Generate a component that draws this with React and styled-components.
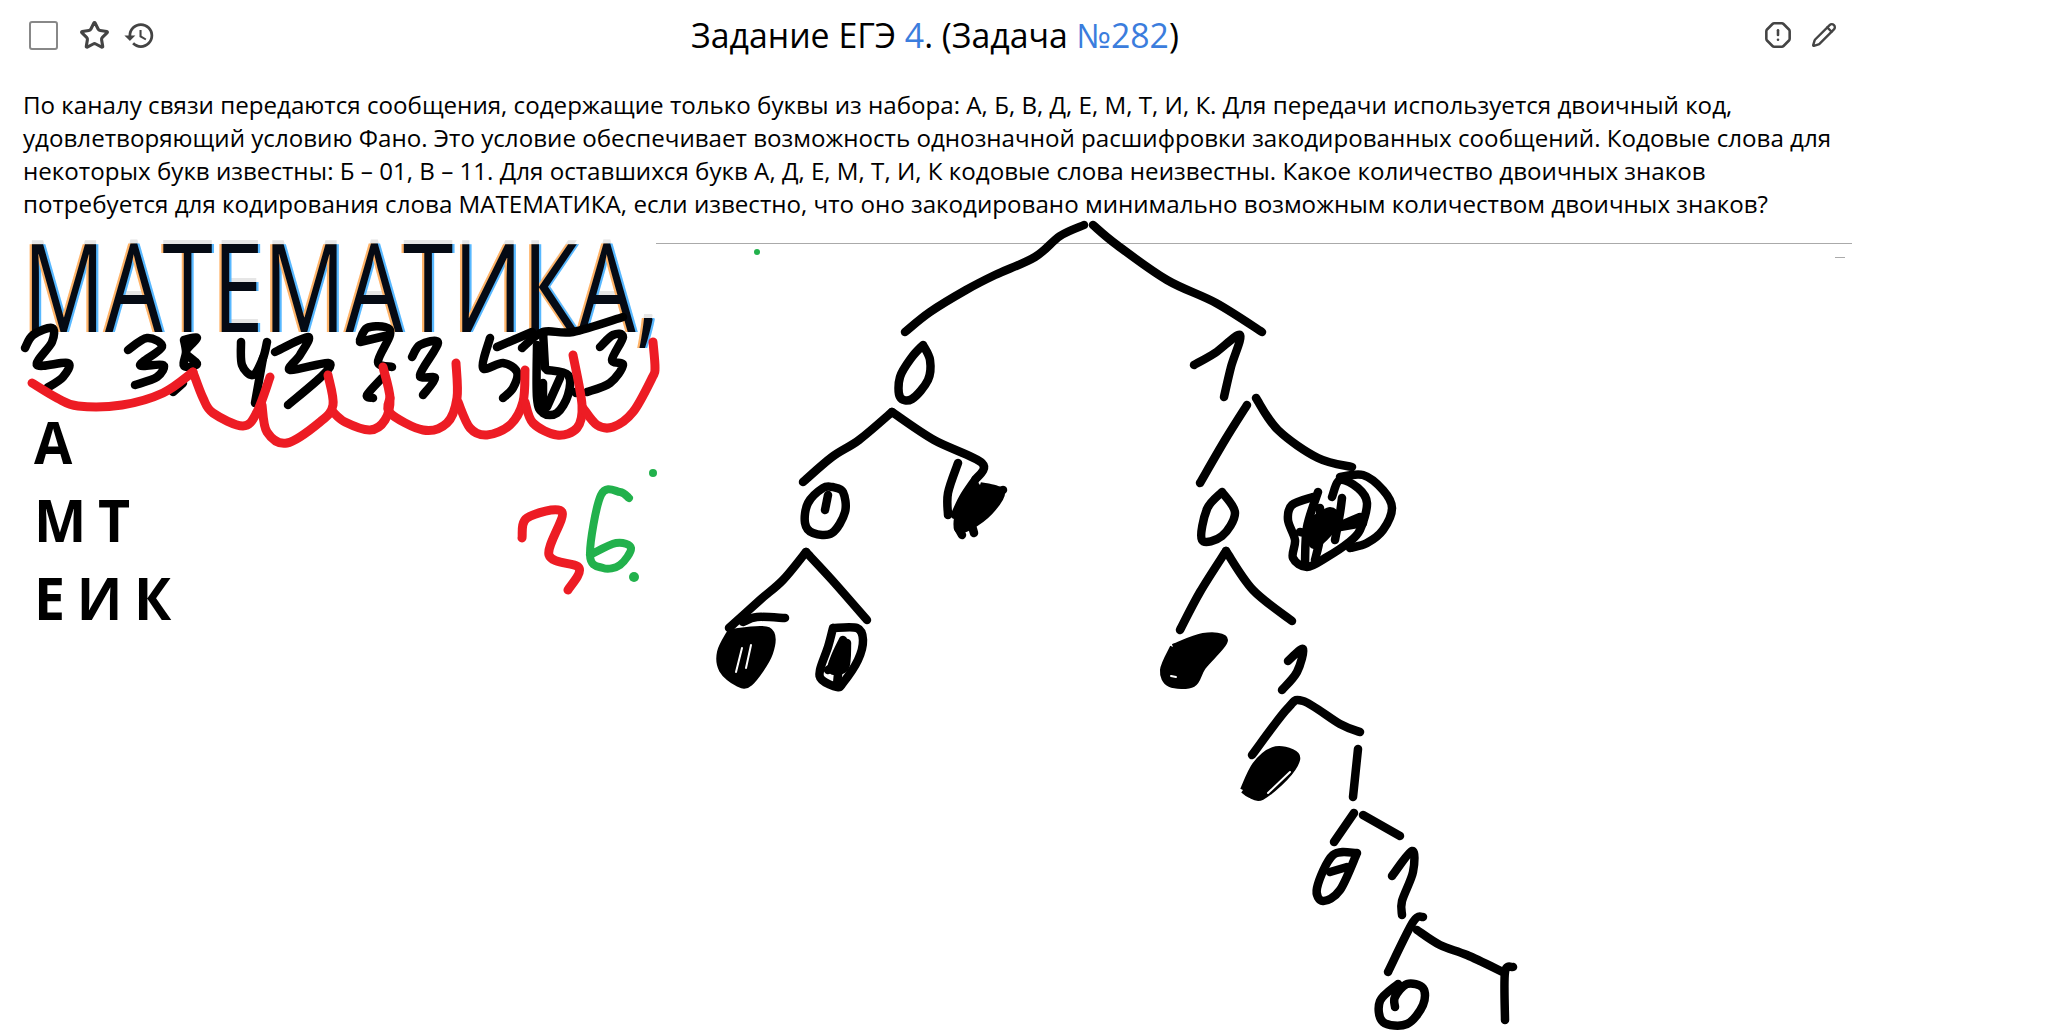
import React from 'react';
import styled, { createGlobalStyle } from 'styled-components';
import { OctagonAlert, Pencil, Star } from 'lucide-react';
import { MdHistory } from 'react-icons/md';

const GlobalStyle = createGlobalStyle`
  html, body {
    margin: 0;
    padding: 0;
    background: #fff;
    overflow: hidden;
  }
`;

const Page = styled.div`
  position: relative;
  width: 2070px;
  height: 1034px;
  overflow: hidden;
  font-family: 'Open Sans', 'Noto Sans', sans-serif;
  color: #000;
`;

const Card = styled.div`
  width: 1852px;
  box-sizing: border-box;
  padding: 0 0 0 23px;
`;

const Header = styled.header`
  display: grid;
  grid-template-columns: 1fr auto 1fr;
  align-items: center;
  height: 70px;
  padding: 0 15px 0 6px;
`;

const Tools = styled.div`
  display: flex;
  align-items: center;
  justify-content: ${({ $end }) => ($end ? 'flex-end' : 'flex-start')};
  gap: ${({ $end }) => ($end ? '19px' : '13px')};
  color: #444;
`;

const Check = styled.span`
  width: 29px;
  height: 29px;
  box-sizing: border-box;
  border: 2px solid #888;
  border-radius: 3px;
  margin-right: 8px;
`;

const Title = styled.h1`
  margin: 0 0 0 4px;
  font-size: 33.8px;
  font-weight: 400;
  line-height: 40px;
  white-space: nowrap;
`;

const Accent = styled.span`
  color: #3b7ddd;
`;

const Statement = styled.p`
  margin: 18px 0 0;
  font-size: 24.15px;
  line-height: 33px;
  width: 1815px;
`;

const Figure = styled.div`
  display: flex;
  margin-top: 23px;
`;

const Picture = styled.div`
  width: 633px;
  flex: none;
`;

const Word = styled.div`
  margin-top: -8px;
  font-size: 123px;
  line-height: 100px;
  height: 100px;
  white-space: nowrap;
  transform-origin: left top;
  transform: scaleX(0.741);
  text-shadow: -3px 0 #ffb469, 3px 0 #58b8ff, 0 -4px #e6e6e6;
  color: #050a14;
`;

const Groups = styled.div`
  margin: 79px 0 0 11px;
  display: flex;
  flex-direction: column;
  gap: 24px;
`;

const Group = styled.div`
  font-size: 59px;
  font-weight: 700;
  line-height: 54px;
  white-space: nowrap;
  word-spacing: -3px;
  transform-origin: left top;
  transform: scaleX(0.94);
`;

const Rule = styled.div`
  flex: 1;
  position: relative;
  height: 1px;
  background: #aaa;
`;

const Dash = styled.span`
  position: absolute;
  right: 7px;
  top: 14px;
  width: 10px;
  height: 1px;
  background: #aaa;
`;

const Sketch = styled.svg`
  position: absolute;
  inset: 0;
  pointer-events: none;
`;

// catmull-rom through the points so the pen lines don't look polygonal
const smooth = (pts) => {
  let d = `M${pts[0][0]} ${pts[0][1]}`;
  for (let i = 0; i < pts.length - 1; i++) {
    const p0 = pts[i - 1] || pts[i];
    const p1 = pts[i];
    const p2 = pts[i + 1];
    const p3 = pts[i + 2] || p2;
    const c1 = [p1[0] + (p2[0] - p0[0]) / 6, p1[1] + (p2[1] - p0[1]) / 6];
    const c2 = [p2[0] - (p3[0] - p1[0]) / 6, p2[1] - (p3[1] - p1[1]) / 6];
    d += `C${c1[0]} ${c1[1]} ${c2[0]} ${c2[1]} ${p2[0]} ${p2[1]}`;
  }
  return d;
};

const blackLines = [
  // tree
  [[1084,225],[1060,236],[1035,257],[995,275],[966,290],[930,312],[905,332]],
  [[1093,225],[1117,245],[1167,280],[1216,303],[1262,332]],
  [[923,345],[930,360],[928,380],[912,399],[900,397],[900,377],[912,357],[923,345]],
  [[1194,365],[1215,353],[1240,335],[1231,367],[1224,397]],
  [[892,412],[859,440],[832,457],[803,482]],
  [[892,412],[934,440],[982,463],[975,480]],
  [[958,463],[948,493],[948,515]],
  [[975,480],[963,498],[955,515]],
  [[958,528],[962,535]],
  [[972,526],[974,533]],
  [[985,495],[1003,490]],
  [[833,487],[843,492],[845,512],[832,533],[813,533],[805,523],[808,503],[823,488],[833,487]],
  [[828,495],[825,510]],
  [[806,552],[783,580],[760,600],[729,628]],
  [[806,552],[832,580],[867,620]],
  [[743,622],[757,617],[785,618]],
  [[833,628],[857,628],[863,640],[858,660],[843,683],[837,687],[822,680],[820,670],[828,647],[833,628]],
  [[843,640],[835,657],[832,670],[845,667],[847,643]],
  [[840,653],[837,685]],
  [[828,670],[843,660]],
  [[1247,405],[1225,440],[1200,483]],
  [[1256,398],[1278,430],[1318,458],[1352,467]],
  [[1222,492],[1235,513],[1222,536],[1202,540],[1207,509],[1222,492]],
  [[1226,551],[1200,592],[1180,630]],
  [[1226,551],[1253,590],[1292,621]],
  [[1288,661],[1303,649],[1297,672],[1282,690]],
  [[1252,755],[1287,709],[1303,701],[1340,724],[1360,732]],
  [[1358,749],[1353,797]],
  [[1354,813],[1334,842]],
  [[1363,815],[1400,836]],
  [[1357,853],[1333,855],[1317,888],[1323,901],[1340,890],[1357,853]],
  [[1330,872],[1347,867]],
  [[1392,876],[1412,851],[1413,872],[1402,901],[1402,915]],
  [[1423,917],[1413,922],[1388,972]],
  [[1417,930],[1440,945],[1467,955],[1503,972]],
  [[1513,967],[1505,972],[1505,1020]],
  [[1398,984],[1380,1001],[1383,1022],[1407,1024],[1423,1005],[1423,988],[1407,984],[1395,997],[1395,1007]],
  // scribbled-out circles on the right
  [[1340,477],[1363,475],[1383,490],[1392,508],[1383,530],[1367,543],[1350,548]],
  [[1332,497],[1340,480],[1358,488],[1367,503],[1360,530],[1348,543],[1327,557],[1307,567],[1293,558],[1295,540],[1288,520],[1292,505],[1313,497]],
  [[1318,492],[1307,527],[1305,563]],
  [[1320,508],[1320,537],[1315,560]],
  [[1300,532],[1320,533],[1360,517]],
  [[1342,498],[1340,513],[1335,540]],
  [[1340,527],[1363,523]],
  // digits under the word
  [[25,348],[33,335],[52,328],[52,342],[37,365],[68,363],[63,377],[47,388]],
  [[128,350],[147,338],[162,347],[140,365],[163,365],[157,377],[135,385]],
  [[184,340],[197,338],[186,352],[197,364],[184,366],[186,352],[184,340]],
  [[183,383],[173,392]],
  [[241,342],[242,365],[253,375],[263,358],[267,342]],
  [[263,358],[255,403]],
  [[275,352],[308,337],[300,355],[290,370],[328,363],[323,375],[288,405]],
  [[360,340],[367,328],[385,327],[390,335],[378,362],[392,367]],
  [[360,342],[385,336]],
  [[382,378],[367,395],[373,398]],
  [[412,357],[420,345],[438,343],[420,375],[435,378],[423,395]],
  [[532,332],[497,347]],
  [[490,338],[483,368],[503,363],[517,372],[513,388],[503,398]],
  [[522,348],[543,332],[573,332],[623,317]],
  [[537,345],[537,398],[543,413],[557,413],[568,395],[568,375],[547,370]],
  [[543,332],[545,368]],
  [[543,383],[543,405]],
  [[560,378],[547,407]],
  [[600,347],[613,335],[623,337],[612,360],[623,365],[610,383],[587,392]],
  [[575,392],[576,393]],
];

const blackBlobs = [
  [[980,485],[1002,492],[990,512],[970,527],[958,530],[957,518],[963,498],[980,485]],
  [[730,632],[768,630],[770,653],[750,683],[737,683],[722,670],[720,652],[730,632]],
  [[1312,520],[1330,510],[1338,520],[1325,538],[1312,545],[1312,520]],
  [[1173,647],[1203,636],[1225,640],[1203,667],[1193,684],[1170,684],[1163,670],[1173,647]],
  [[1243,790],[1255,765],[1273,750],[1292,752],[1297,760],[1285,778],[1262,797],[1250,795],[1243,790]],
];

// little gaps the pen left inside the filled scribbles
const slits = [
  [[742,648],[736,672]],
  [[751,645],[746,668]],
  [[1268,793],[1290,772]],
  [[1171,676],[1176,677]],
];

const redLines = [
  [[32,383],[57,398],[78,406],[122,405],[163,393],[193,372]],
  [[193,372],[203,398],[213,413],[243,426],[257,412],[270,377]],
  [[262,405],[267,432],[287,443],[320,422],[333,405],[328,375]],
  [[333,412],[345,422],[370,430],[385,420],[390,398],[383,367]],
  [[390,398],[390,413],[423,430],[447,423],[457,398],[456,363]],
  [[458,402],[470,428],[487,435],[510,425],[523,402],[525,370]],
  [[525,402],[533,423],[557,435],[577,428],[582,405],[573,355]],
  [[583,408],[597,425],[613,427],[633,412],[652,378],[655,368],[653,342]],
  [[522,538],[527,518],[562,512],[549,555],[579,568],[568,590]],
];

const greenLines = [
  [[629,498],[620,492],[601,495],[590,555],[603,568],[620,565],[631,548],[616,543],[590,555]],
];

const greenDots = [[653,473,4],[634,577,5],[757,252,3]];

const Pen = ({ lines, color, width }) =>
  lines.map((pts, i) => (
    <path
      key={i}
      d={smooth(pts)}
      fill="none"
      stroke={color}
      strokeWidth={width}
      strokeLinecap="round"
      strokeLinejoin="round"
    />
  ));

const Drawing = () => (
  <Sketch width="2070" height="1034" viewBox="0 0 2070 1034">
    <Pen lines={blackLines} color="#000" width={8.5} />
    {blackBlobs.map((p, i) => (
      <path key={i} d={smooth(p)} fill="#000" stroke="#000" strokeWidth="6" strokeLinejoin="round" />
    ))}
    <Pen lines={slits} color="#fff" width={2} />
    <Pen lines={redLines} color="#ed1c24" width={9} />
    <Pen lines={greenLines} color="#22b14c" width={8} />
    {greenDots.map(([x, y, r], i) => (
      <circle key={i} cx={x} cy={y} r={r} fill="#22b14c" />
    ))}
  </Sketch>
);

export default function App() {
  return (
    <Page>
      <GlobalStyle />
      <Card>
        <Header>
          <Tools>
            <Check />
            <Star size={31} strokeWidth={2.4} />
            <MdHistory size={33} />
          </Tools>
          <Title>
            Задание ЕГЭ <Accent>4</Accent>. (Задача <Accent>№282</Accent>)
          </Title>
          <Tools $end>
            <OctagonAlert size={28} strokeWidth={2.2} />
            <Pencil size={26} strokeWidth={2.2} />
          </Tools>
        </Header>
        <Statement>
          По каналу связи передаются сообщения, содержащие только буквы из набора: А, Б, В, Д, Е, М, Т, И, К. Для передачи используется двоичный код, удовлетворяющий условию Фано. Это условие обеспечивает возможность однозначной расшифровки закодированных сообщений. Кодовые слова для некоторых букв известны: Б – 01, В – 11. Для оставшихся букв А, Д, Е, М, Т, И, К кодовые слова неизвестны. Какое количество двоичных знаков потребуется для кодирования слова МАТЕМАТИКА, если известно, что оно закодировано минимально возможным количеством двоичных знаков?
        </Statement>
        <Figure>
          <Picture>
            <Word>МАТЕМАТИКА,</Word>
            <Groups>
              <Group>А</Group>
              <Group>М Т</Group>
              <Group>Е И К</Group>
            </Groups>
          </Picture>
          <Rule>
            <Dash />
          </Rule>
        </Figure>
      </Card>
      <Drawing />
    </Page>
  );
}
